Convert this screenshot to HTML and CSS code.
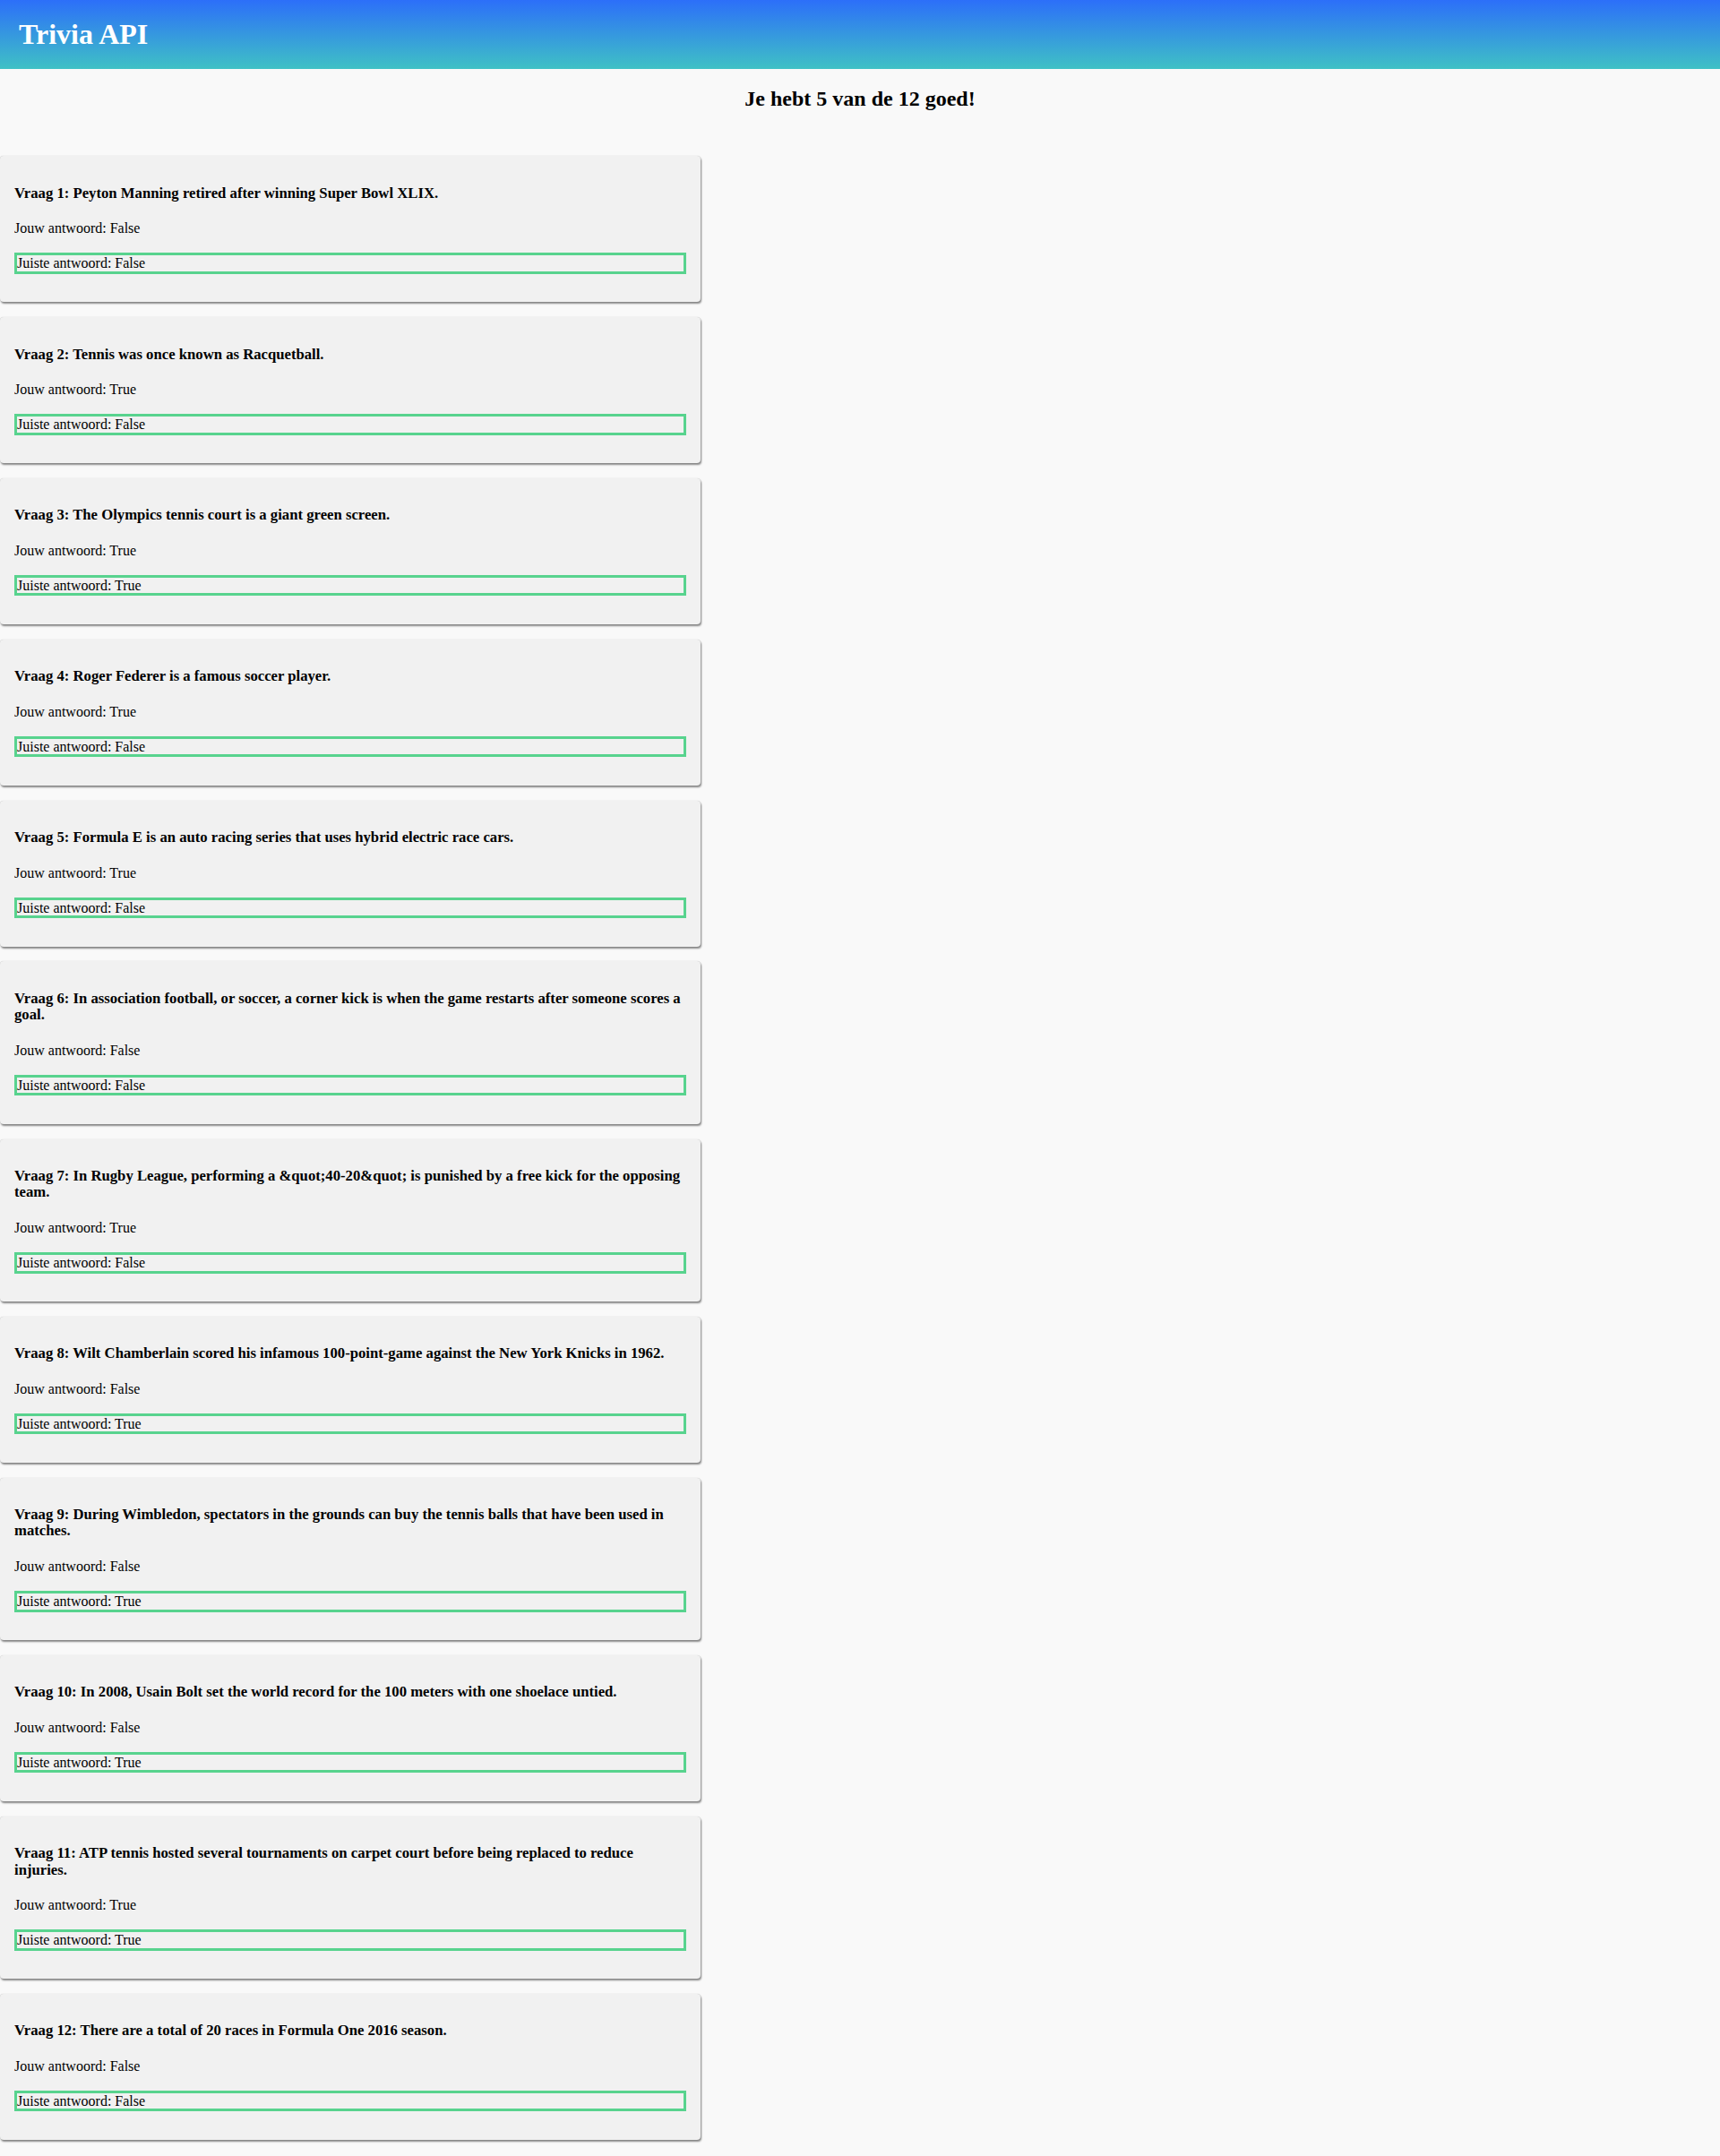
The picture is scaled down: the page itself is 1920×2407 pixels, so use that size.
FILE: index.html
```html
<!DOCTYPE html>
<html lang="nl">
<head>
<meta charset="utf-8">
<title>Trivia API</title>
<link rel="stylesheet" href="styles.css">
</head>
<body>
<header class="topbar">
  <h1 class="brand">Trivia API</h1>
</header>
<h2 class="score">Je hebt 5 van de 12 goed!</h2>
<main class="results">
  <section class="card">
    <h4 class="question">Vraag 1: Peyton Manning retired after winning Super Bowl XLIX.</h4>
    <p class="given">Jouw antwoord: False</p>
    <p class="correct">Juiste antwoord: False</p>
  </section>
  <section class="card">
    <h4 class="question">Vraag 2: Tennis was once known as Racquetball.</h4>
    <p class="given">Jouw antwoord: True</p>
    <p class="correct">Juiste antwoord: False</p>
  </section>
  <section class="card">
    <h4 class="question">Vraag 3: The Olympics tennis court is a giant green screen.</h4>
    <p class="given">Jouw antwoord: True</p>
    <p class="correct">Juiste antwoord: True</p>
  </section>
  <section class="card">
    <h4 class="question">Vraag 4: Roger Federer is a famous soccer player.</h4>
    <p class="given">Jouw antwoord: True</p>
    <p class="correct">Juiste antwoord: False</p>
  </section>
  <section class="card">
    <h4 class="question">Vraag 5: Formula E is an auto racing series that uses hybrid electric race cars.</h4>
    <p class="given">Jouw antwoord: True</p>
    <p class="correct">Juiste antwoord: False</p>
  </section>
  <section class="card">
    <h4 class="question">Vraag 6: In association football, or soccer, a corner kick is when the game restarts after someone scores a goal.</h4>
    <p class="given">Jouw antwoord: False</p>
    <p class="correct">Juiste antwoord: False</p>
  </section>
  <section class="card">
    <h4 class="question">Vraag 7: In Rugby League, performing a &amp;quot;40-20&amp;quot; is punished by a free kick for the opposing team.</h4>
    <p class="given">Jouw antwoord: True</p>
    <p class="correct">Juiste antwoord: False</p>
  </section>
  <section class="card">
    <h4 class="question">Vraag 8: Wilt Chamberlain scored his infamous 100-point-game against the New York Knicks in 1962.</h4>
    <p class="given">Jouw antwoord: False</p>
    <p class="correct">Juiste antwoord: True</p>
  </section>
  <section class="card">
    <h4 class="question">Vraag 9: During Wimbledon, spectators in the grounds can buy the tennis balls that have been used in matches.</h4>
    <p class="given">Jouw antwoord: False</p>
    <p class="correct">Juiste antwoord: True</p>
  </section>
  <section class="card">
    <h4 class="question">Vraag 10: In 2008, Usain Bolt set the world record for the 100 meters with one shoelace untied.</h4>
    <p class="given">Jouw antwoord: False</p>
    <p class="correct">Juiste antwoord: True</p>
  </section>
  <section class="card">
    <h4 class="question">Vraag 11: ATP tennis hosted several tournaments on carpet court before being replaced to reduce injuries.</h4>
    <p class="given">Jouw antwoord: True</p>
    <p class="correct">Juiste antwoord: True</p>
  </section>
  <section class="card">
    <h4 class="question">Vraag 12: There are a total of 20 races in Formula One 2016 season.</h4>
    <p class="given">Jouw antwoord: False</p>
    <p class="correct">Juiste antwoord: False</p>
  </section>
</main>
</body>
</html>
```

FILE: styles.css
```css
html, body {
  margin: 0;
  padding: 0;
}

body {
  background: #f9f9f9;
  color: #000;
  font-family: "Liberation Serif", "Times New Roman", serif;
  font-size: 16px;
}

.topbar {
  background: linear-gradient(to bottom, #2c6ff9 0%, #3fc1c5 100%);
  padding: 20px 21px;
}

.brand {
  margin: 0;
  font-size: 32px;
  font-weight: bold;
  color: #fff;
  line-height: normal;
}

.score {
  margin: 19.92px 0;
  font-size: 24px;
  font-weight: bold;
  text-align: center;
}

.results {
  display: flex;
  flex-direction: column;
  gap: 16.7px;
  padding: 30.5px 0 12px;
}

.card {
  width: 750px;
  padding: 11.2px 16px 15.6px;
  background: #f1f1f1;
  border-radius: 4px;
  box-shadow: 0 0 1px rgba(0, 0, 0, 0.3), 1px 2px 2px rgba(0, 0, 0, 0.45);
}

.question {
  margin: 21.28px 0;
  font-size: 16.7px;
  line-height: 18.4px;
  font-weight: bold;
}

.given {
  margin: 16px 0;
}

.correct {
  margin: 18px 0 16px;
  border: 3px solid #58d38e;
  line-height: 17.4px;
}
```
